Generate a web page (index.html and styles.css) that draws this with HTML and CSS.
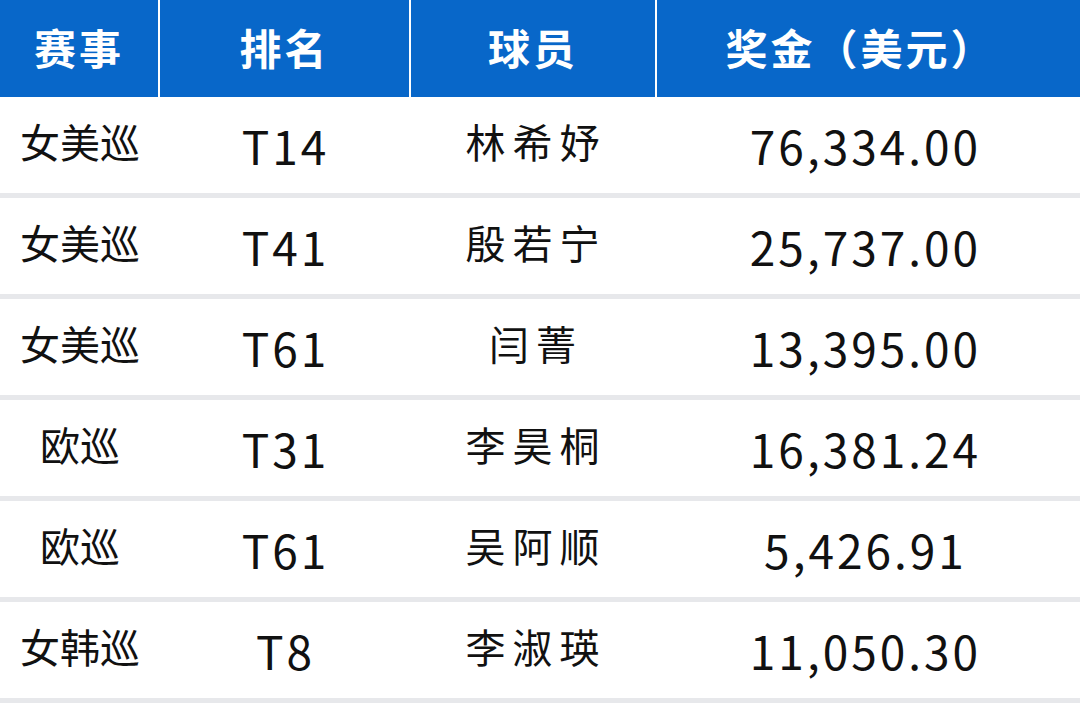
FILE: index.html
```html
<!DOCTYPE html>
<html lang="zh">
<head>
<meta charset="utf-8">
<link rel="stylesheet" href="styles.css">
</head>
<body>
<div class="table">
  <div class="row head">
    <div class="cell c1">赛事</div>
    <div class="cell c2">排名</div>
    <div class="cell c3">球员</div>
    <div class="cell c4">奖金（美元）</div>
  </div>
  <div class="row">
    <div class="cell c1">女美巡</div>
    <div class="cell c2">T14</div>
    <div class="cell c3">林希妤</div>
    <div class="cell c4">76,334.00</div>
  </div>
  <div class="row">
    <div class="cell c1">女美巡</div>
    <div class="cell c2">T41</div>
    <div class="cell c3">殷若宁</div>
    <div class="cell c4">25,737.00</div>
  </div>
  <div class="row">
    <div class="cell c1">女美巡</div>
    <div class="cell c2">T61</div>
    <div class="cell c3">闫菁</div>
    <div class="cell c4">13,395.00</div>
  </div>
  <div class="row">
    <div class="cell c1">欧巡</div>
    <div class="cell c2">T31</div>
    <div class="cell c3">李昊桐</div>
    <div class="cell c4">16,381.24</div>
  </div>
  <div class="row">
    <div class="cell c1">欧巡</div>
    <div class="cell c2">T61</div>
    <div class="cell c3">吴阿顺</div>
    <div class="cell c4">5,426.91</div>
  </div>
  <div class="row">
    <div class="cell c1">女韩巡</div>
    <div class="cell c2">T8</div>
    <div class="cell c3">李淑瑛</div>
    <div class="cell c4">11,050.30</div>
  </div>
</div>
</body>
</html>
```
FILE: styles.css
```css
html, body {
  margin: 0;
  padding: 0;
  background: #ffffff;
}
body {
  font-family: "Noto Sans CJK SC", "Noto Sans", sans-serif;
  color: #111111;
  width: 1080px;
  height: 705px;
  overflow: hidden;
}
.table {
  display: flex;
  flex-direction: column;
}
.row {
  display: grid;
  grid-template-columns: 160px 251px 246px 1fr;
  height: 96px;
  border-bottom: 5px solid #e7e8eb;
  align-items: center;
}
.cell {
  text-align: center;
  line-height: 1;
}
.cell.c1 {
  font-size: 40px;
  letter-spacing: 0;
  padding-bottom: 9px;
}
.cell.c3 {
  font-size: 40px;
  letter-spacing: 7px;
  padding-bottom: 9px;
  padding-left: 4px;
}
.cell.c2,
.cell.c4 {
  font-size: 46px;
  letter-spacing: 3px;
}
.cell.c4 {
  padding-right: 6px;
}
.row.head {
  height: 97px;
  border-bottom: none;
  background: #0867c9;
  color: #ffffff;
  align-items: stretch;
}
.row.head .cell {
  border-right: 2px solid #ffffff;
  display: flex;
  align-items: center;
  justify-content: center;
  font-weight: 700;
  font-size: 42px;
  letter-spacing: 3px;
  padding: 0 0 4px 0;
}
.row.head .cell.c4 {
  border-right: none;
  padding-right: 16px;
}
```
